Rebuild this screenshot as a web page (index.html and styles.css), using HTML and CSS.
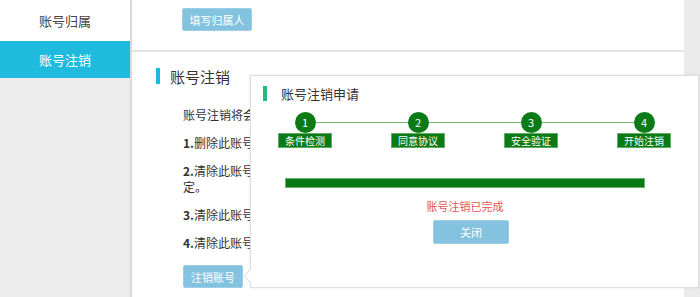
FILE: index.html
```html
<!DOCTYPE html>
<html lang="zh-CN">
<head>
    <meta charset="UTF-8">
    <title>账号注销</title>
    <link rel="stylesheet" href="styles.css">
</head>
<body>
    <div class="sidebar">
        <div class="menu-item">账号归属</div>
        <div class="menu-item active">账号注销</div>
    </div>

    <div class="main">
        <div class="section-top">
            <button class="btn">填写归属人</button>
        </div>

        <div class="section">
            <div class="title"><span class="bar"></span>账号注销</div>
            <div class="content">
                <p>账号注销将会清除</p>
                <p><b>1.</b>删除此账号下</p>
                <p><b>2.</b>清除此账号下<br>定。</p>
                <p><b>3.</b>清除此账号下</p>
                <p><b>4.</b>清除此账号下</p>
                <button class="btn btn-cancel">注销账号</button>
            </div>
        </div>

        <!-- 弹出层 -->
        <div class="popover">
            <div class="pop-title"><span class="bar"></span>账号注销申请</div>
            <div class="steps">
                <div class="step">
                    <div class="circle">1</div>
                    <div class="label">条件检测</div>
                </div>
                <div class="step">
                    <div class="circle">2</div>
                    <div class="label">同意协议</div>
                </div>
                <div class="step">
                    <div class="circle">3</div>
                    <div class="label">安全验证</div>
                </div>
                <div class="step">
                    <div class="circle">4</div>
                    <div class="label">开始注销</div>
                </div>
            </div>
            <div class="progress"></div>
            <div class="done">账号注销已完成</div>
            <button class="btn btn-close">关闭</button>
        </div>
    </div>

    <div class="scrollbar"></div>
</body>
</html>
```

FILE: styles.css
```css
body {
    margin: 0;
    display: flex;
    height: 297px;
    overflow: hidden;
    font-family: "Microsoft YaHei", "Noto Sans CJK SC", sans-serif;
    color: #333;
}
.sidebar {
    width: 130px;
    background-color: #ececec;
    border-right: 2px solid #d9d9d9;
}
.menu-item {
    height: 41px;
    line-height: 41px;
    text-align: center;
    font-size: 13px;
    background-color: #fff;
    color: #444;
}
.menu-item.active {
    height: 37px;
    line-height: 37px;
    background-color: #1fbbde;
    color: #fff;
}
.main {
    flex: 1;
    position: relative;
    background-color: #fff;
}
.scrollbar {
    width: 16px;
    background-color: #ebebeb;
}
.btn {
    border: 1px solid #9ccfe6;
    border-radius: 2px;
    background-color: #84c3df;
    color: #fff;
    font-family: inherit;
    font-size: 11px;
    cursor: pointer;
    padding: 0;
}
.section-top {
    height: 50px;
    border-bottom: 2px solid #e4e4e4;
}
.section-top .btn {
    margin: 8px 0 0 50px;
    width: 70px;
    height: 23px;
}
.section {
    padding-top: 16px;
}
.title {
    display: flex;
    align-items: center;
    margin-left: 24px;
    font-size: 15px;
    height: 16px;
    color: #333;
}
.title .bar {
    width: 4px;
    height: 16px;
    background-color: #1fb8de;
    margin-right: 10px;
}
.content {
    padding: 23px 0 0 51px;
    font-size: 12px;
}
.content p {
    margin: 0 0 12px;
    line-height: 16px;
    white-space: nowrap;
}
.content b {
    font-weight: bold;
}
.btn-cancel {
    margin-top: 2px;
    width: 60px;
    height: 23px;
}
/* 弹出层 */
.popover {
    position: absolute;
    left: 118px;
    top: 75px;
    width: 447px;
    height: 211px;
    background-color: #fff;
    border: 1px solid #dedede;
    box-shadow: 0 0 3px rgba(0, 0, 0, 0.08);
}
.popover::before,
.popover::after {
    content: "";
    position: absolute;
    top: 193px;
    border-style: solid;
    border-color: transparent;
}
.popover::before {
    left: -8px;
    border-width: 7px 8px 7px 0;
    border-right-color: #d6d6d6;
}
.popover::after {
    left: -7px;
    top: 194px;
    border-width: 6px 7px 6px 0;
    border-right-color: #fff;
}
.pop-title {
    display: flex;
    align-items: center;
    margin: 9px 0 0 12px;
    font-size: 13px;
    height: 16px;
}
.pop-title .bar {
    width: 4px;
    height: 15px;
    background-color: #22bb7d;
    margin-right: 14px;
}
.steps {
    position: relative;
    display: flex;
    justify-content: space-between;
    width: 393px;
    margin: 11px 0 0 27px;
}
.steps::before {
    content: "";
    position: absolute;
    left: 27px;
    right: 27px;
    top: 10px;
    height: 1px;
    background-color: #6dbb6d;
}
.step {
    position: relative;
    width: 54px;
    display: flex;
    flex-direction: column;
    align-items: center;
}
.circle {
    width: 21px;
    height: 21px;
    line-height: 21px;
    border-radius: 50%;
    background-color: #0b7a17;
    color: #fff;
    font-size: 11px;
    text-align: center;
}
.label {
    margin-top: 0;
    width: 52px;
    height: 13px;
    line-height: 13px;
    background-color: #0b7a17;
    border: 1px solid #5fae5f;
    color: #fff;
    font-size: 10px;
    text-align: center;
    white-space: nowrap;
}
.progress {
    margin: 30px 0 0 34px;
    width: 360px;
    height: 10px;
    background-color: #087a14;
    border: 1px solid #6cae6c;
    box-sizing: border-box;
}
.done {
    margin: 10px 0 0 34px;
    width: 360px;
    text-align: center;
    font-size: 11px;
    color: #e25555;
}
.btn-close {
    display: block;
    margin: 6px 0 0 182px;
    width: 76px;
    height: 24px;
    font-size: 11px;
}
```
